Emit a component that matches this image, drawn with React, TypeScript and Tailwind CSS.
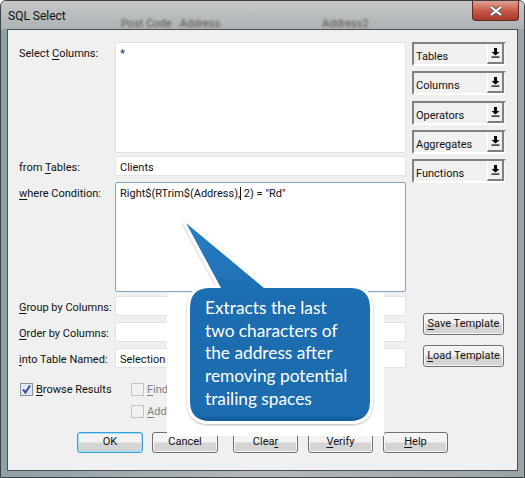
import type { ReactNode } from "react";

const ui = "font-['Roboto','Open_Sans',sans-serif]";

// one letter underlined, like a Windows mnemonic
function Key({ children }: { children: ReactNode }) {
  return <span className="underline underline-offset-2">{children}</span>;
}

function Field({
  label,
  value,
  height,
  active,
}: {
  label: ReactNode;
  value?: ReactNode;
  height: string;
  active?: boolean;
}) {
  return (
    <div className="flex">
      <div className="w-[96px] shrink-0 whitespace-nowrap pt-[4px] text-[11px] leading-[16px] text-[#111]">{label}</div>
      <div
        className={`flex-1 rounded-[2px] border bg-white px-[4px] pt-[3px] text-[11px] leading-[16px] text-[#111] ${height} ${
          active ? "border-[#7fa6c6]" : "border-[#e2e3e5]"
        }`}
      >
        {value}
      </div>
    </div>
  );
}

function Drop({ label, className = "" }: { label: string; className?: string }) {
  return (
    <div className={`flex h-[24px] border-2 border-t-[#808080] border-l-[#808080] border-r-[#f4f4f4] border-b-[#ffffff] ${className}`}>
      <div className="flex-1 pl-[2px] pt-[5px] text-[11px] leading-[16px] text-[#111]">{label}</div>
      <div className="flex w-[17px] items-center justify-center border-r-2 border-b-2 border-r-[#808080] border-b-[#808080] border-l border-l-[#fff] bg-[#f0f0f0]">
        <svg width="9" height="10" viewBox="0 0 9 10">
          <path d="M3 0h3v4h2.5L4.5 7.5.5 4H3z" fill="#000" />
          <rect x="0.5" y="8.5" width="8" height="1.2" fill="#000" />
        </svg>
      </div>
    </div>
  );
}

function Btn({ children, className, focus }: { children: ReactNode; className: string; focus?: boolean }) {
  return (
    <div
      className={`flex items-center justify-center whitespace-nowrap rounded-[3px] border bg-gradient-to-b from-[#f3f3f3] from-45% to-[#d4d4d4] to-55% text-[11px] text-[#111] ${className} ${
        focus ? "border-[#3a9fd6] shadow-[inset_0_0_0_1px_#9fe0f7]" : "border-[#707070] shadow-[inset_0_0_0_1px_#f8f8f8]"
      }`}
    >
      {children}
    </div>
  );
}

function Check({ checked, label, dim }: { checked?: boolean; label: ReactNode; dim?: boolean }) {
  return (
    <div className={`flex h-[13px] items-center gap-[3px] whitespace-nowrap text-[11px] ${dim ? "text-[#808080]" : "text-[#111]"}`}>
      <div
        className={`flex h-[13px] w-[13px] shrink-0 items-center justify-center border ${
          checked ? "border-[#8e8f8f] bg-[#dfe8f6]" : "border-[#c4c4c4] bg-[#f0f0f0]"
        }`}
      >
        {checked && (
          <svg width="11" height="11" viewBox="0 0 11 11">
            <path d="M2 5.5l2.5 3L9 1.5" fill="none" stroke="#3d4f8c" strokeWidth="2" />
          </svg>
        )}
      </div>
      <span className="pt-px">{label}</span>
    </div>
  );
}

export default function App() {
  return (
    <div
      className={`relative flex h-[478px] w-[525px] flex-col overflow-hidden rounded-t-[6px] border border-[#3b4145] bg-gradient-to-r from-[#8fa0a6] via-[#b4b8ba] to-[#9aa4a8] ${ui}`}
    >
      {/* title bar */}
      <div className="relative flex h-[28px] shrink-0 items-center bg-gradient-to-b from-[#c6c8c9] to-[#aeb2b4] pl-[7px] pt-[2px] text-[12px] text-[#111]">
        SQL Select
        <div className="absolute left-[120px] top-[15px] whitespace-nowrap text-[11px] text-[#555] blur-[1.2px]">Post Code&nbsp;&nbsp;&nbsp;Address</div>
        <div className="absolute left-[321px] top-[15px] whitespace-nowrap text-[11px] text-[#555] blur-[1.2px]">Address2</div>
        <div className="absolute right-[5px] top-0 flex h-[20px] w-[47px] items-center justify-center rounded-b-[4px] border border-t-0 border-[#5c2a22] bg-gradient-to-b from-[#dfa093] from-0% via-[#c9594a] via-50% to-[#a83a2a]">
          <svg width="16" height="12" viewBox="0 0 16 12">
            <path d="M3 2l10 8M13 2l-10 8" stroke="#5a5f66" strokeWidth="3.6" />
            <path d="M3 2l10 8M13 2l-10 8" stroke="#fff" strokeWidth="2.2" />
          </svg>
        </div>
      </div>

      {/* dialog body */}
      <div className="mx-[6px] flex h-[442px] flex-col border border-[#4a5156] bg-[#f0f0f0] pl-[11px] pt-[12px]">
        <div className="flex">
          <div className="flex w-[387px] flex-col">
            <Field label={<>Select <Key>C</Key>olumns:</>} value={<span className="font-bold text-[#1b4a7a]">*</span>} height="h-[111px]" />
            <div className="h-[3px]" />
            <Field label={<>from <Key>T</Key>ables:</>} value="Clients" height="h-[20px]" />
            <div className="h-[6px]" />
            <Field
              active
              label={<><Key>w</Key>here Condition:</>}
              value={<>Right$(RTrim$(Address)<span className="border-r border-[#111]">,</span> 2) = "Rd"</>}
              height="h-[110px]"
            />
          </div>
          <div className="ml-[6px] flex w-[94px] flex-col gap-[5px]">
            <Drop label="Tables" />
            <Drop label="Columns" />
            <Drop label="Operators" className="mt-px" />
            <Drop label="Aggregates" />
            <Drop label="Functions" />
          </div>
        </div>

        <div className="mt-[4px] flex">
          <div className="flex w-[387px] flex-col gap-[6px]">
            <Field label={<><Key>G</Key>roup by Columns:</>} height="h-[20px]" />
            <Field label={<><Key>O</Key>rder by Columns:</>} height="h-[20px]" />
            <Field label={<><Key>i</Key>nto Table Named:</>} value="Selection" height="h-[20px]" />
          </div>
          <div className="ml-[17px] flex flex-col gap-[10px] pt-[17px]">
            <Btn className="h-[22px] w-[81px]"><span><Key>S</Key>ave Template</span></Btn>
            <Btn className="h-[22px] w-[81px]"><span><Key>L</Key>oad Template</span></Btn>
          </div>
        </div>

        <div className="mt-[15px] flex">
          <div className="w-[112px] pl-px">
            <Check checked label={<><Key>B</Key>rowse Results</>} />
          </div>
          <div className="flex flex-col gap-[9px]">
            <Check dim label={<><Key>F</Key>ind</>} />
            <Check dim label={<><Key>A</Key>dd</>} />
          </div>
        </div>

        <div className="mt-[14px] flex pl-[58px]">
          <Btn focus className="h-[21px] w-[66px]">OK</Btn>
          <Btn className="ml-[9px] h-[21px] w-[66px]">Cancel</Btn>
          <Btn className="ml-[15px] h-[21px] w-[65px]"><span>Clea<Key>r</Key></span></Btn>
          <Btn className="ml-[10px] h-[21px] w-[65px]"><span><Key>V</Key>erify</span></Btn>
          <Btn className="ml-[10px] h-[21px] w-[65px]"><span><Key>H</Key>elp</span></Btn>
        </div>
      </div>

      {/* callout pasted over the dialog */}
      <div className="absolute left-[166px] top-[292px] h-[143px] w-[217px] bg-white" />
      <svg className="absolute left-[169px] top-[210px]" width="220" height="225" viewBox="169 210 220 225">
        <defs>
          <linearGradient id="fill" x1="0" y1="0" x2="0" y2="1">
            <stop offset="0" stopColor="#2a7fc4" />
            <stop offset="0.4" stopColor="#1b6cb0" />
            <stop offset="0.97" stopColor="#1b6cb0" />
            <stop offset="1" stopColor="#135a96" />
          </linearGradient>
          <filter id="soft" x="-10%" y="-10%" width="120%" height="120%">
            <feDropShadow dx="0" dy="1" stdDeviation="1.2" floodColor="#000" floodOpacity="0.3" />
          </filter>
        </defs>
        <path
          d="M185 222 L263 287 H349 Q369 287 369 307 V400 Q369 420 349 420 H209 Q189 420 189 400 V307 Q189 287 209 287 H220 Z"
          fill="url(#fill)"
          stroke="#fff"
          strokeWidth="6"
          strokeLinejoin="round"
          paintOrder="stroke"
          filter="url(#soft)"
        />
      </svg>
      <div className="absolute left-[204px] top-[296px] w-[150px] font-['Lato',sans-serif] text-[17.3px] leading-[22.7px] text-white">
        Extracts the last two characters of the address after removing potential trailing spaces
      </div>
    </div>
  );
}
